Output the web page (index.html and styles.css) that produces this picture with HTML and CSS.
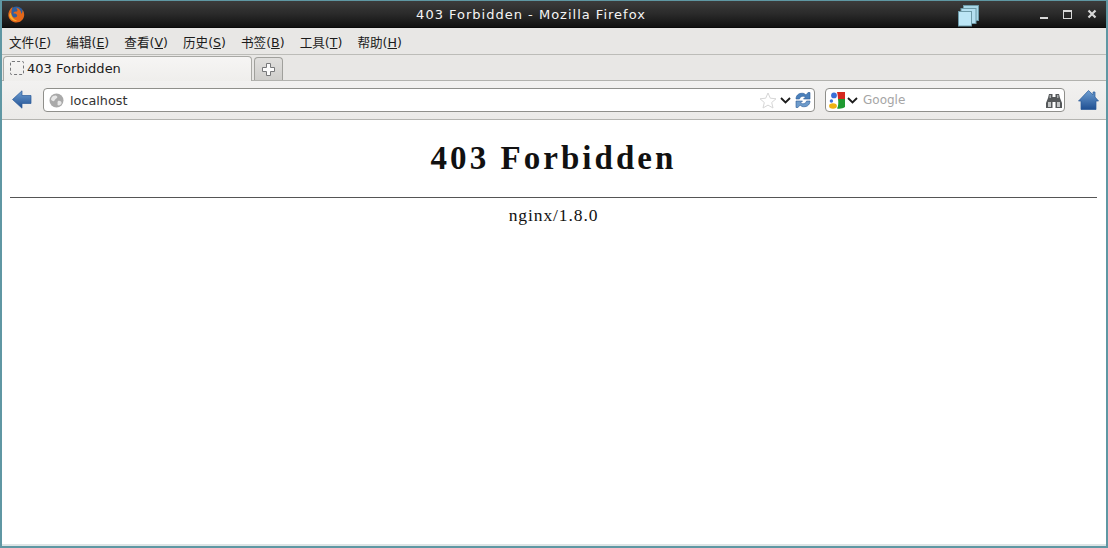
FILE: index.html
```html
<!DOCTYPE html>
<html lang="zh">
<head>
    <meta charset="UTF-8">
    <title>403 Forbidden - Mozilla Firefox</title>
    <link rel="stylesheet" href="styles.css">
</head>
<body>
<div class="ventana">
    <header class="titulo">
        <svg class="logo" width="18" height="18" viewBox="0 0 18 18">
            <circle cx="9.5" cy="8.5" r="7" fill="#2f5f9f"/>
            <path d="M6 1.5 C2.5 4 0.8 7.5 1.4 11 C2.2 15 5.6 17.5 9.5 17.5 C13.8 17.5 17 14.2 17.2 10 C17.2 8 16.5 6 15.4 4.6 C15.8 6.5 15.3 8 14.4 9 C14.2 6 12.4 3.4 9.2 2.8 C10.6 4.4 10.8 5.8 10 6.6 C8 6.2 6.4 7 6.4 8.6 C8 8.4 10.2 9 10.2 10.6 C10.2 12.2 8 13.2 6.4 12.2 C4.8 11 4 9 4.6 6.8 C4.4 5.2 5.2 3 6 1.5 Z" fill="#e4681a"/>
            <path d="M3.8 7.5 C4.4 12 7 15 10.4 15.6 C7 16.8 3.2 14.6 2.4 11 C2.1 9.5 2.8 8.2 3.8 7.5 Z" fill="#f8b02a"/>
        </svg>
        <div class="titulo-texto">403 Forbidden - Mozilla Firefox</div>
        <div class="controles">
            <span class="ctl-min"></span>
            <span class="ctl-max"></span>
            <svg width="10" height="10" viewBox="0 0 10 10"><path d="M1.5 1.5 L8.5 8.5 M8.5 1.5 L1.5 8.5" stroke="#d8d8d8" stroke-width="2.2"/></svg>
        </div>
        <svg class="escritorios" width="22" height="22" viewBox="0 0 22 22">
            <rect x="5.5" y="0.5" width="15" height="15" fill="#a9d6e6" stroke="#6d9aa8"/>
            <rect x="3" y="3.5" width="15" height="15" fill="#b4dff0" stroke="#6d9aa8"/>
            <rect x="0.5" y="6.5" width="13" height="14.5" fill="#bce6f6" stroke="#6d9aa8"/>
        </svg>
    </header>

    <nav class="menu">
        <span>文件(<u>F</u>)</span>
        <span>编辑(<u>E</u>)</span>
        <span>查看(<u>V</u>)</span>
        <span>历史(<u>S</u>)</span>
        <span>书签(<u>B</u>)</span>
        <span>工具(<u>T</u>)</span>
        <span>帮助(<u>H</u>)</span>
    </nav>

    <div class="pestanas">
        <div class="pestana">
            <span class="pestana-icono"></span>
            <span>403 Forbidden</span>
        </div>
        <div class="pestana-nueva">
            <svg width="15" height="15" viewBox="0 0 15 15"><path d="M5.5 1.5 H9.5 V5.5 H13.5 V9.5 H9.5 V13.5 H5.5 V9.5 H1.5 V5.5 H5.5 Z" fill="#fbfbfb" stroke="#77787a"/></svg>
        </div>
    </div>

    <div class="barra">
        <svg class="atras" width="20" height="20" viewBox="0 0 20 20">
            <defs>
                <linearGradient id="azul" x1="0" y1="0" x2="0" y2="1">
                    <stop offset="0" stop-color="#6f9fd2"/>
                    <stop offset="1" stop-color="#1f4f92"/>
                </linearGradient>
            </defs>
            <path d="M0.5 9.5 L10 0.8 V5.5 H19 V13.5 H10 V18.2 Z" fill="url(#azul)" stroke="#2a5a9a" stroke-width="0.7"/>
        </svg>

        <div class="campo campo-url">
            <svg width="15" height="15" viewBox="0 0 15 15">
                <circle cx="7.5" cy="7.5" r="7" fill="#a9a9a9"/>
                <path d="M4 3 C6 2 8 2.5 8.5 4 C8 6 6 5.5 5.5 7.5 C5 9 3 8 2 6.5 C2 5 3 4 4 3 Z M9 8 C11 7.5 13 8.5 12.5 10.5 C11.5 12.5 9.5 13 8.5 12 C9 10.5 8 9.5 9 8 Z" fill="#e6e6e6"/>
            </svg>
            <span class="url-texto">localhost</span>
            <svg class="estrella" width="18" height="17" viewBox="0 0 18 17"><path d="M9 1 L11.3 6.2 L17 6.8 L12.7 10.5 L14 16 L9 13.1 L4 16 L5.3 10.5 L1 6.8 L6.7 6.2 Z" fill="#fff" stroke="#d6d6d6"/></svg>
            <svg class="flecha" width="11" height="7" viewBox="0 0 11 7"><path d="M1 1 L5.5 5.5 L10 1" fill="none" stroke="#1c1c1c" stroke-width="1.8"/></svg>
            <svg class="recargar" width="16" height="18" viewBox="0 0 16 18">
                <path d="M1 8 C1 3.5 5 1.5 9 2.5 L11 4 L13 1.5 L15 1.5 V8 H8.5 L10.5 6 C8 4.5 5 5.5 4.5 8 Z" fill="#4a80bb" stroke="#2b5c98" stroke-width="0.6"/>
                <path d="M15 10 C15 14.5 11 16.5 7 15.5 L5 14 L3 16.5 L1 16.5 V10 H7.5 L5.5 12 C8 13.5 11 12.5 11.5 10 Z" fill="#6d9bcb" stroke="#2b5c98" stroke-width="0.6"/>
            </svg>
        </div>

        <div class="campo campo-busqueda">
            <svg width="16" height="17" viewBox="0 0 16 17">
                <path d="M8 0 H16 V7 H9 C9 4 8.5 2 8 0 Z" fill="#d5281f"/>
                <path d="M9 7 H16 V15 C14 16.5 11 17 8 16.5 C9.5 14 9.5 10 9 7 Z" fill="#1f9a31"/>
                <circle cx="5" cy="3.4" r="2.9" fill="#3a6fd8"/>
                <circle cx="2.4" cy="9" r="1.7" fill="#3a6fd8"/>
                <ellipse cx="4" cy="14" rx="3.9" ry="2.7" fill="#eeb211"/>
            </svg>
            <svg class="flecha" width="11" height="7" viewBox="0 0 11 7"><path d="M1 1 L5.5 5.5 L10 1" fill="none" stroke="#1c1c1c" stroke-width="1.8"/></svg>
            <span class="busqueda-texto">Google</span>
            <svg class="binoculares" width="16" height="15" viewBox="0 0 16 15">
                <path d="M2 5 L3 1 H6.5 V4 H9.5 V1 H13 L14 5 L16 10 V15 H9.5 V9 H6.5 V15 H0 V10 Z" fill="#55585a"/>
                <rect x="2" y="9" width="3" height="5" fill="#c3c5c6"/>
                <rect x="11" y="9" width="3" height="5" fill="#c3c5c6"/>
                <rect x="3.5" y="2" width="1.5" height="3" fill="#a8aaac"/>
                <rect x="11" y="2" width="1.5" height="3" fill="#a8aaac"/>
            </svg>
        </div>

        <svg class="inicio" width="21" height="20" viewBox="0 0 21 20">
            <path d="M10.5 0.5 L15 4.8 V2 H17 V7 L20.5 11 H18 V19.5 H3 V11 H0.5 Z" fill="url(#azul)" stroke="#2a5a9a" stroke-width="0.7"/>
        </svg>
    </div>

    <main class="contenido">
        <h1>403 Forbidden</h1>
        <hr>
        <p>nginx/1.8.0</p>
    </main>
</div>
</body>
</html>
```

FILE: styles.css
```css
html, body {
    margin: 0;
    height: 100%;
}

body {
    background: #e6e6e4;
    overflow: hidden;
}

.ventana {
    box-sizing: border-box;
    height: 548px;
    display: flex;
    flex-direction: column;
    border: 2px solid #5f97a3;
    border-top-width: 1px;
    font-family: "DejaVu Sans", "Noto Sans CJK SC", sans-serif;
    font-size: 13px;
    color: #1c1c1c;
}

/* barra de titulo */
.titulo {
    position: relative;
    flex: none;
    height: 26px;
    display: flex;
    align-items: center;
    background: linear-gradient(#3c3c3c 0%, #2a2a2a 50%, #111 100%);
    border-bottom: 1px solid #0a0a0a;
    color: #f4f4f4;
}

.logo {
    flex: none;
    margin: 0 4px 0 5px;
}

.titulo-texto {
    flex: 1;
    padding-right: 5px;
    text-align: center;
    letter-spacing: 1px;
}

.controles {
    flex: none;
    width: 66px;
    display: flex;
    align-items: center;
    gap: 15px;
    padding-left: 2px;
}

.ctl-min {
    width: 8px;
    height: 2px;
    margin-top: 7px;
    background: #d8d8d8;
}

.ctl-max {
    box-sizing: border-box;
    width: 9px;
    height: 9px;
    border: 1px solid #d8d8d8;
    border-top-width: 2px;
}

.escritorios {
    position: absolute;
    left: 956px;
    top: 4px;
}

/* menu */
.menu {
    flex: none;
    height: 26px;
    display: flex;
    align-items: center;
    gap: 15px;
    padding-left: 7px;
    background: #e8e7e5;
    border-bottom: 1px solid #bcbcb8;
    font-size: 12.6px;
}

/* pestanas */
.pestanas {
    flex: none;
    height: 25px;
    display: flex;
    align-items: flex-end;
    gap: 2px;
    padding-left: 1px;
    background: #e8e7e5;
    border-bottom: 1px solid #b2b2ae;
}

.pestana {
    box-sizing: border-box;
    width: 249px;
    height: 25px;
    margin-bottom: -1px;
    display: flex;
    align-items: center;
    gap: 3px;
    padding: 0 0 2px 6px;
    background: linear-gradient(#f6f5f4, #efeeec);
    border: 1px solid #a9a9a5;
    border-bottom: none;
    border-radius: 4px 4px 0 0;
}

.pestana-icono {
    box-sizing: border-box;
    width: 14px;
    height: 14px;
    border: 1px dashed #77787a;
    border-radius: 2px;
}

.pestana-nueva {
    box-sizing: border-box;
    width: 29px;
    height: 23px;
    display: flex;
    align-items: center;
    justify-content: center;
    background: linear-gradient(#e0dfdd, #cfcecb);
    border: 1px solid #a0a09c;
    border-bottom: none;
    border-radius: 4px 4px 0 0;
}

/* barra de navegacion */
.barra {
    flex: none;
    height: 38px;
    display: flex;
    align-items: center;
    padding-left: 10px;
    background: linear-gradient(#f2f1f0, #ebeae8);
    border-bottom: 1px solid #b4b4b0;
}

.atras {
    flex: none;
    margin-right: 11px;
}

.campo {
    box-sizing: border-box;
    flex: none;
    height: 24px;
    display: flex;
    align-items: center;
    background: #fff;
    border: 1px solid #8f8f8b;
    border-radius: 4px;
}

.campo-url {
    width: 772px;
    margin-right: 10px;
    padding: 0 3px 0 5px;
}

.url-texto {
    flex: 1;
    margin-left: 6px;
    font-size: 12.8px;
    color: #333;
}

.estrella {
    margin-right: 4px;
}

.flecha {
    margin-left: -1px;
}

.recargar {
    margin-left: 4px;
}

.campo-busqueda {
    width: 240px;
    margin-right: 13px;
    padding: 0 2px 0 3px;
}

.campo-busqueda .flecha {
    margin-left: 2px;
}

.busqueda-texto {
    flex: 1;
    margin-left: 5px;
    font-size: 12px;
    color: #a5a5a5;
}

/* pagina */
.contenido {
    flex: 1;
    padding: 0 9px 0 8px;
    background: #fff;
    border-bottom: 2px solid #dde5e6;
    color: #111;
    font-family: "Liberation Serif", serif;
    text-align: center;
}

.contenido h1 {
    margin: 20px 0 21px;
    font-size: 33px;
    line-height: 36px;
    font-weight: bold;
    letter-spacing: 3.05px;
}

.contenido hr {
    height: 1px;
    margin: 0;
    border: none;
    background: #555;
}

.contenido p {
    margin: 9px 0 0;
    font-size: 17.5px;
    line-height: 17px;
    letter-spacing: 0.9px;
}
```
